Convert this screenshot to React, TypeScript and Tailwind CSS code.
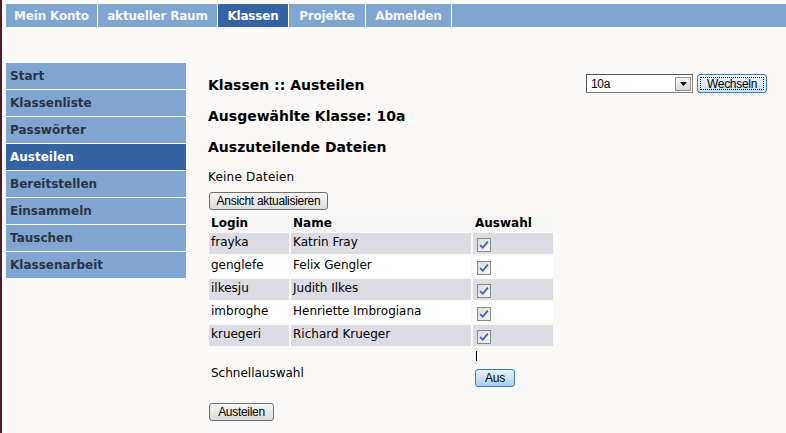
import React from "react";

const navItems: [string, string][] = [
  ["Mein Konto", "w-[92px]"],
  ["aktueller Raum", "w-[120px]"],
  ["Klassen", "w-[71px]"],
  ["Projekte", "w-[77px]"],
  ["Abmelden", "w-[86px]"],
];
const sideItems = ["Start", "Klassenliste", "Passwörter", "Austeilen", "Bereitstellen", "Einsammeln", "Tauschen", "Klassenarbeit"];
const rows = [
  ["frayka", "Katrin Fray"],
  ["genglefe", "Felix Gengler"],
  ["ilkesju", "Judith Ilkes"],
  ["imbroghe", "Henriette Imbrogiana"],
  ["kruegeri", "Richard Krueger"],
];

function Check() {
  return (
    <span className="inline-flex w-[14px] h-[14px] border border-[#8a8a8a] bg-gradient-to-br from-[#dcdcd8] to-[#f8f8f6] items-center justify-center">
      <svg width="10" height="10" viewBox="0 0 9 9">
        <path d="M1 4.5 L3.3 7 L8 1.5" fill="none" stroke="#3d5fb0" strokeWidth="1.6" />
      </svg>
    </span>
  );
}

function XpButton({ children, className = "" }: { children: React.ReactNode; className?: string }) {
  return (
    <div
      className={
        "inline-flex items-center justify-center h-[18px] rounded-[3px] border border-[#707070] bg-gradient-to-b from-[#f6f6f6] to-[#dcdcdc] text-[12px] leading-none text-black tracking-[-0.3px] " +
        className
      }
      style={{ fontFamily: "'Liberation Sans', Arial, sans-serif" }}
    >
      {children}
    </div>
  );
}

export default function App() {
  return (
    <div
      className="min-h-[433px] w-[786px] bg-[#faf9f8] border-l-2 border-[#4b1c2c] overflow-hidden"
      style={{ fontFamily: "'DejaVu Sans', Verdana, sans-serif" }}
    >
      {/* Top nav */}
      <div className="mt-[4px] ml-[4px] h-[23px] flex bg-[#81a5d1]">
        {navItems.map(([n, w]) => (
          <div
            key={n}
            className={
              "h-full flex items-center justify-center text-[12px] font-bold border-r border-white whitespace-nowrap tracking-[-0.2px] " +
              w +
              " " +
              (n === "Klassen" ? "bg-[#3363a3] text-white" : "text-[#f4f6fa]")
            }
          >
            {n}
          </div>
        ))}
      </div>

      <div className="flex mt-[36px]">
        {/* Sidebar */}
        <div className="ml-[4px] w-[180px] flex flex-col gap-[1px]">
          {sideItems.map((s) => (
            <div
              key={s}
              className={
                "h-[26px] flex items-center pl-[4px] text-[12px] font-bold " +
                (s === "Austeilen" ? "bg-[#3363a3] text-white" : "bg-[#81a5d1] text-[#2b3447]")
              }
            >
              {s}
            </div>
          ))}
        </div>

        {/* Main */}
        <div className="ml-[22px] flex-1 text-black">
          <div className="flex items-start justify-between pr-[19px]">
            <div className="mt-[13px] text-[14px] font-bold leading-[18px]">Klassen :: Austeilen</div>
            <div className="flex items-center gap-[4px] mt-[11px]">
              <div className="w-[107px] h-[19px] bg-white border border-[#7f7f7f] border-t-[#555] border-l-[#555] flex items-center justify-between pl-[4px] pr-[1px]">
                <span className="text-[12px] tracking-[-0.3px]" style={{ fontFamily: "'Liberation Sans', Arial, sans-serif" }}>10a</span>
                <span className="w-[16px] h-[14px] bg-gradient-to-b from-[#f4f4f4] to-[#d8d8d8] border border-[#909090] flex items-center justify-center">
                  <svg width="7" height="4" viewBox="0 0 7 4"><path d="M0 0 H7 L3.5 4 Z" fill="#000" /></svg>
                </span>
              </div>
              <div
                className="w-[70px] h-[19px] rounded-[3px] border border-[#3c7fb1] bg-gradient-to-b from-[#f2f8fd] to-[#c5def2] flex items-center justify-center p-[2px]"
              >
                <div className="w-full h-full border border-dotted border-black flex items-center justify-center text-[12px] leading-none tracking-[-0.3px]" style={{ fontFamily: "'Liberation Sans', Arial, sans-serif" }}>
                  Wechseln
                </div>
              </div>
            </div>
          </div>
          <div className="mt-[13px] text-[14px] font-bold leading-[18px]">Ausgewählte Klasse: 10a</div>
          <div className="mt-[13px] text-[14px] font-bold leading-[18px]">Auszuteilende Dateien</div>
          <div className="mt-[13px] text-[12px] leading-[16px] tracking-[0.2px]">Keine Dateien</div>
          <XpButton className="mt-[7px] ml-[1px] w-[119px]">Ansicht aktualisieren</XpButton>

          <div className="mt-[4px] ml-[1px] grid grid-cols-[80px_180px_80px] gap-x-[2px] gap-y-[2px] w-[344px] text-[12px]">
            <div className="bg-[#f6f6f6] font-bold h-[15px] leading-[15px] pl-[2px]">Login</div>
            <div className="bg-[#f6f6f6] font-bold h-[15px] leading-[15px] pl-[2px]">Name</div>
            <div className="bg-[#f6f6f6] font-bold h-[15px] leading-[15px] pl-[2px]">Auswahl</div>
            {rows.map(([l, n], i) => {
              const bg = i % 2 === 0 ? "bg-[#dcdce4]" : "bg-white";
              return (
                <React.Fragment key={l}>
                  <div className={bg + " h-[21px] pl-[2px] pt-[1px] leading-[16px]"}>{l}</div>
                  <div className={bg + " h-[21px] pl-[2px] pt-[1px] leading-[16px]"}>{n}</div>
                  <div className={bg + " h-[21px] pl-[4px] pt-[4px]"}><Check /></div>
                </React.Fragment>
              );
            })}
            <div className="col-span-2 flex items-center pl-[2px] h-[42px] pt-[8px]">Schnellauswahl</div>
            <div className="h-[42px] pl-[2px] flex flex-col">
              <span className="mt-[3px] ml-[1px] w-[1px] h-[10px] bg-black" />
              <div
                className="mt-[8px] w-[40px] h-[18px] rounded-[3px] border border-[#3c7fb1] bg-gradient-to-b from-[#e9f3fc] to-[#a9cfee] flex items-center justify-center text-[12px] leading-none tracking-[-0.3px]"
                style={{ fontFamily: "'Liberation Sans', Arial, sans-serif" }}
              >
                Aus
              </div>
            </div>
          </div>
          <XpButton className="mt-[13px] ml-[1px] w-[65px]">Austeilen</XpButton>
        </div>
      </div>
    </div>
  );
}
